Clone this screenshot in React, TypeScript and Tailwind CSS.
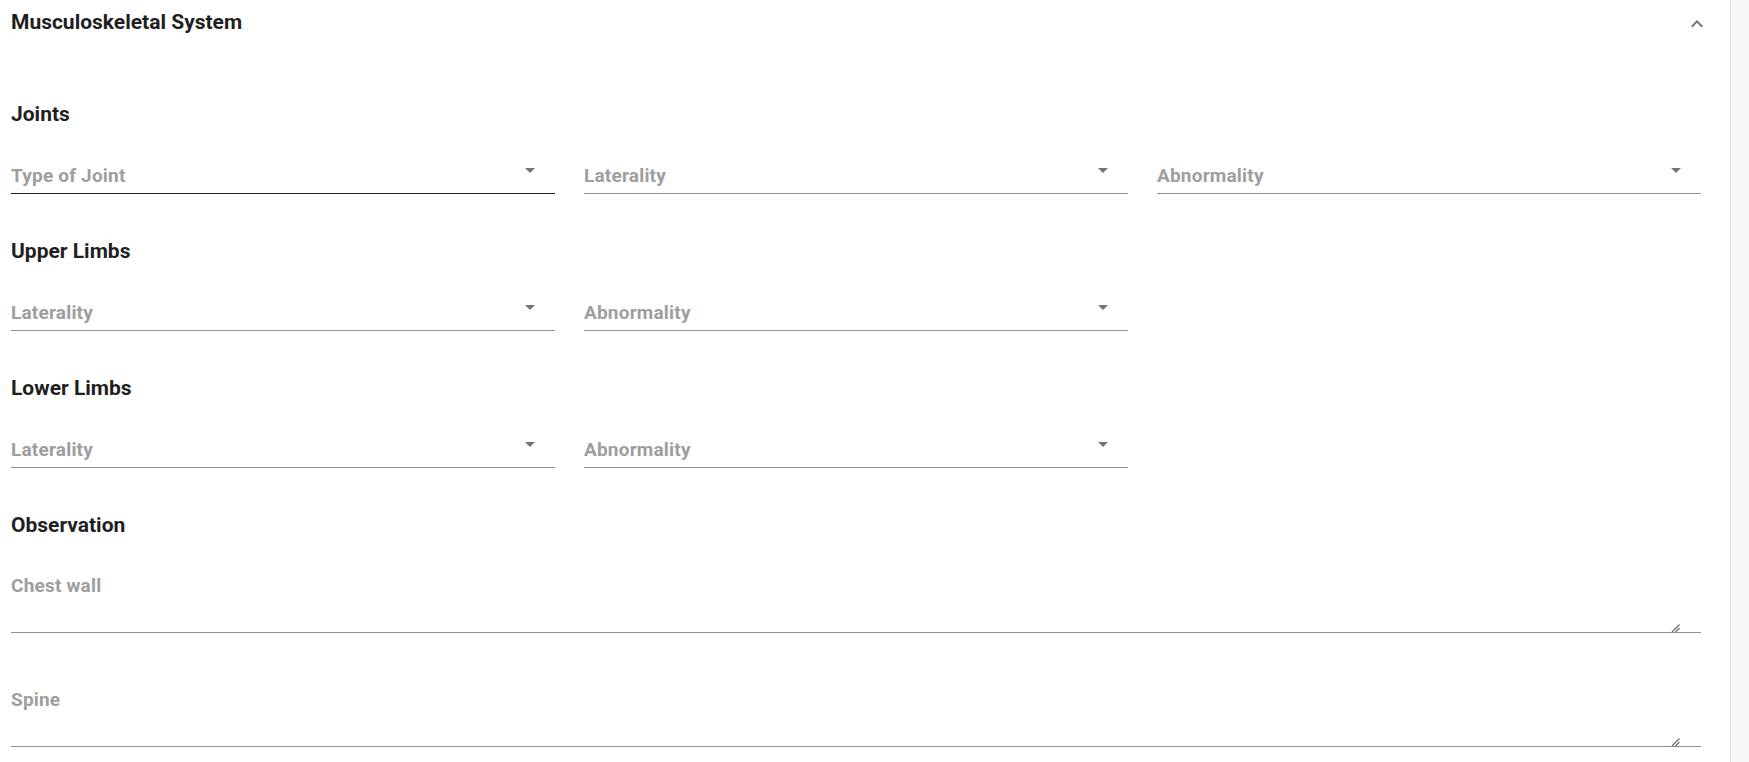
import React from "react";

const ArrowDown = (): React.JSX.Element => (
  <span className="mt-[6px] mr-[20px] h-0 w-0 border-x-[5px] border-t-[5px] border-x-transparent border-t-[#757575]" />
);

const Grip = (): React.JSX.Element => (
  <svg width="9" height="8" viewBox="0 0 9 8" className="mr-[21px]">
    <path d="M1 8 L8.5 0.5 M4.5 8 L8.5 4" stroke="#6b6b6b" strokeWidth="1.2" fill="none" />
  </svg>
);

const SelectField = ({ label, active }: { label: string; active?: boolean }): React.JSX.Element => (
  <div className={`pt-[33px] pb-[4px] border-b ${active ? "border-[#222222]" : "border-[#8f8f8f]"}`}>
    <div className="flex h-[27px] items-start justify-between">
      <span className="text-[19px] leading-[27px] tracking-[0.2px] font-bold text-[#9e9e9e]">{label}</span>
      <ArrowDown />
    </div>
  </div>
);

const NoteField = ({ label, className }: { label: string; className?: string }): React.JSX.Element => (
  <div className={`pt-[32px] border-b border-[#8f8f8f] ${className ?? ""}`}>
    <div className="h-[27px] text-[19px] leading-[27px] tracking-[0.2px] font-bold text-[#9e9e9e]">{label}</div>
    <div className="flex h-[33px] items-end justify-end">
      <Grip />
    </div>
  </div>
);

const Heading = ({ children, className }: { children: React.ReactNode; className?: string }): React.JSX.Element => (
  <h3 className={`h-[30px] text-[21px] leading-[30px] font-bold text-[#1f1f1f] ${className ?? ""}`}>{children}</h3>
);

const App = (): React.JSX.Element => (
  <div className="flex h-[762px] w-full bg-white font-['Roboto',sans-serif]">
    <main className="w-[1730px] shrink-0">
      <header className="flex h-[44px] items-center justify-between pl-[11px] pr-[21px]">
        <h2 className="text-[21px] leading-[30px] font-bold text-[#1f1f1f]">Musculoskeletal System</h2>
        <svg width="24" height="24" viewBox="0 0 24 24" className="mt-[4px]">
          <path d="M12 8l-6 6 1.41 1.41L12 10.83l4.59 4.58L18 14z" fill="#757575" />
        </svg>
      </header>

      <section className="pl-[11px] pr-[29px]">
        <Heading className="mt-[55px]">Joints</Heading>
        <div className="grid grid-cols-3 gap-x-[29px]">
          <SelectField label="Type of Joint" active />
          <SelectField label="Laterality" />
          <SelectField label="Abnormality" />
        </div>

        <Heading className="mt-[42px]">Upper Limbs</Heading>
        <div className="grid grid-cols-3 gap-x-[29px]">
          <SelectField label="Laterality" />
          <SelectField label="Abnormality" />
        </div>

        <Heading className="mt-[42px]">Lower Limbs</Heading>
        <div className="grid grid-cols-3 gap-x-[29px]">
          <SelectField label="Laterality" />
          <SelectField label="Abnormality" />
        </div>

        <Heading className="mt-[42px]">Observation</Heading>
        <NoteField label="Chest wall" />
        <NoteField label="Spine" className="mt-[21px]" />
      </section>
    </main>
    <aside className="flex-1 border-l border-[#e4e4e4] bg-[#f8f8f8]" />
  </div>
);

export default App;
